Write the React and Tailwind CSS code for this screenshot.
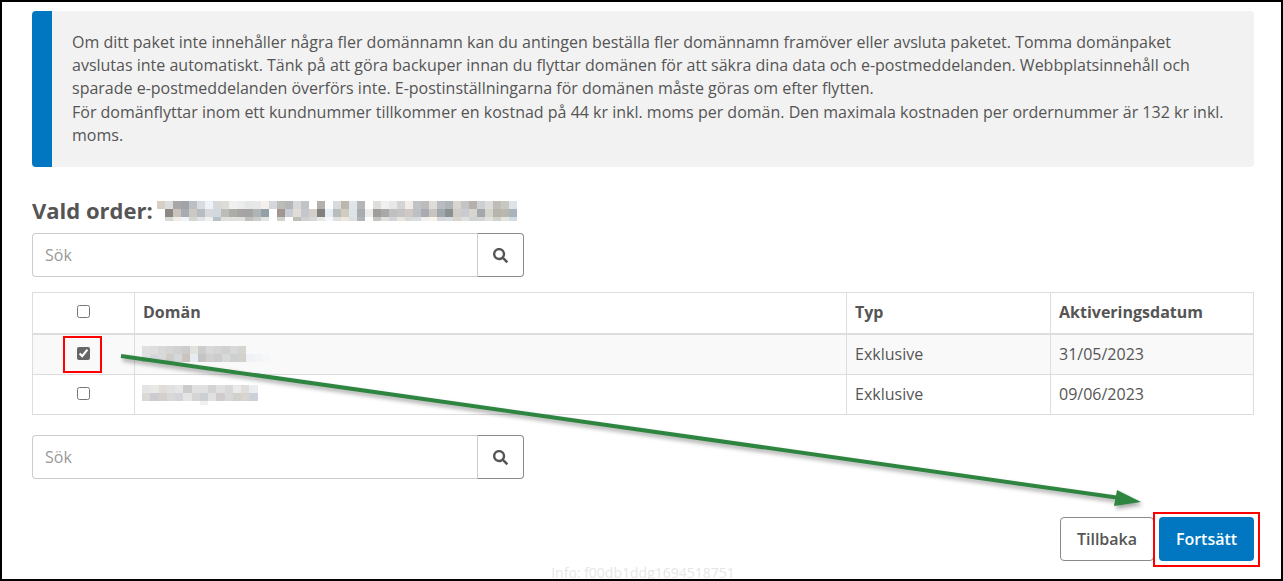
import React from "react";
import { FaSearch } from "react-icons/fa";

const orderRows = [
  "d8cfc4,dcdcdc,a8a8a8,a0a4a8,bcc0c4,d8dce0,eef2f8,d8d8d8,dcdcd8,f0f0f0,ececec,e4e6e8,e8e8e8,f4f0ec,d4d8dc,bcbcb8,b4b6b8,d8d8d8,c0c4c8,ffffff,b4b0ac,fcfdff,d8dadc,bcb6ac,e0e6e8,b4b6b8,ffffff,e0dedc,f0f0f0,e8e8ea,d4d4d4,f0ece8,c0c2c4,bcbcbc,e0dcd8,b8bcc0,b0b4b8,d8d4d0,c4c4c4,b4b0ac,ccd0d4,dcdcdc,c0bcb8,c8c8c0,dce4e8",
  "ffffff,8c8884,c8c4bc,a8acb0,ccc8c4,b8bcc0,d8d8dc,d0d8e0,bcbcb8,acaca8,a8a4a4,a4a4a4,b0b4b4,94a0a8,ffffff,a09890,c8ccd4,e0dcd8,c4c8cc,d4d0c8,808080,e8ecf4,b8bcbc,d0ccc0,dce4e8,a8acb0,ececec,a09c9c,a8a8a8,c0c0c0,c4c4c4,d0c8c4,bcc0c4,a8acb0,c8c4c0,a0a8ac,8c9090,d0ccc8,c8ccd0,d8d4d0,a4a8ac,d4d4cc,b8b4ac,b8b8b0,a8b4bc",
  "ffffff,d8d8d8,f0ece8,f0f4f8,d4d4d0,e0e4e8,f0f0f0,b8c0c8,e0e0dc,e0e0e0,e0e0dc,c0c0bc,ccccc8,e0e4e4,ffffff,d0d0cc,ffffff,c0bcb8,d0d0d0,d4d8dc,e8e8e4,f4f6fa,e0e0e0,ece8e0,dce0e0,b0b4b8,ffffff,c4c4c0,e0e0dc,d0d4d8,e8e4e0,d8d8d4,d8dce0,f0f0f0,f8f4ec,d4d8dc,d8dce0,d8d4cc,e0e0e0,d0d4d0,d4d4d4,e0e0dc,d0d0cc,e4e4e0,d0dce4",
];
const domainRowsA = [
  "e0e0e0,dedede,d8d8d8,d4d4d4,d0d0d0,cccccf,e2e2de,cccccc,d8d8d8,d4d4d4,d0d0d0,d8d8d8,d4d4d0,f9f9f9,f9f9f9,f9f9f9",
  "e0e2e4,d4d8dc,d8d8d8,d0ccc8,d4d8dc,ccc4bc,e6ecf0,c4c4c4,d0d0d0,cccccc,d8d8d8,ccd0d0,d4d0cc,eef2f6,f2f4f6,f6f7f8",
];
const domainRowsB = [
  "e4e4e4,e8e8e4,e0dcd8,e0e0e0,e6e6e6,cccccc,e0e0e0,e0e0e0,d4d4d4,e0e0e0,d8d8d8,eaeaea,e0dcdc,eaecf0",
  "dcd8d4,ccccd0,d4d0cc,d8d8d8,d4d4d8,e4e4e4,d4d4d4,ccd0d4,e0e0e0,d0cccc,d8d8d8,d0d0cc,d8d4d0,ccd0d8",
  "ffffff,ffffff,ffffff,ffffff,ffffff,ffffff,ffffff,f0f0f0,ffffff,ffffff,ffffff,ffffff,ffffff,ffffff",
];

function Pixels({ rows, cell, heights, className }) {
  const parsed = rows.map((r) => r.split(","));
  const cols = parsed[0].length;
  const hs = heights || rows.map(() => 8);
  const total = hs.reduce((a, b) => a + b, 0);
  let y = 0;
  return (
    <svg width={cols * cell} height={total} className={"block " + (className || "")} shapeRendering="crispEdges">
      {parsed.map((row, ri) => {
        const top = y;
        y += hs[ri];
        return row.map((c, ci) => (
          <rect key={ri + "-" + ci} x={ci * cell} y={top} width={cell + 0.5} height={hs[ri]} fill={"#" + c} />
        ));
      })}
    </svg>
  );
}

function SearchBox({ className }) {
  return (
    <div className={"flex h-[44px] w-[492px] " + className}>
      <input
        readOnly
        placeholder="Sök"
        className="h-full w-[445px] rounded-l-[4px] border border-r-0 border-[#cccccc] bg-white px-[12px] text-[16px] text-[#555555] outline-none placeholder:text-[#999999]"
      />
      <button className="flex h-full w-[47px] items-center justify-center rounded-r-[4px] border border-[#8a8a8a] border-l-[#cccccc] bg-white text-[#555555]">
        <FaSearch size={15} />
      </button>
    </div>
  );
}

function Box({ checked }) {
  return (
    <input
      type="checkbox"
      readOnly
      checked={!!checked}
      className="mx-auto mb-[2px] mt-0 block h-[13px] w-[13px] accent-[#666666]"
    />
  );
}

export default function App() {
  return (
    <div
      className="relative h-[581px] w-[1283px] overflow-hidden border-2 border-black bg-white text-[16px] text-[#555555]"
      style={{ fontFamily: '"Open Sans", sans-serif' }}
    >
      <div className="pl-[30px] pr-[27px] pt-[9px]">
        <div className="flex h-[156px] overflow-hidden rounded-[4px] bg-[#f2f2f2]">
          <div className="w-[20px] shrink-0 bg-[#0077c0]" />
          <div className="py-[19.5px] pl-[20px] pr-[20px] leading-[23.4px]">
            Om ditt paket inte innehåller några fler domännamn kan du antingen beställa fler domännamn framöver eller avsluta paketet. Tomma domänpaket avslutas inte automatiskt. Tänk på att göra backuper innan du flyttar domänen för att säkra dina data och e-postmeddelanden. Webbplatsinnehåll och sparade e-postmeddelanden överförs inte. E-postinställningarna för domänen måste göras om efter flytten.
            <br />
            För domänflyttar inom ett kundnummer tillkommer en kostnad på 44 kr inkl. moms per domän. Den maximala kostnaden per ordernummer är 132 kr inkl. moms.
          </div>
        </div>

        <div className="mt-[28px] flex h-[30px] items-center">
          <h2 className="text-[22px] font-bold leading-[30px]">Vald order:</h2>
          <Pixels rows={orderRows} cell={8} heights={[8, 8, 4]} className="ml-[4px] mt-[1px]" />
        </div>

        <SearchBox className="mt-[8px]" />

        <table className="mt-[15px] w-[1221px] table-fixed border-collapse border border-[#dddddd] text-[16px]">
          <colgroup>
            <col className="w-[102px]" />
            <col className="w-[712px]" />
            <col className="w-[204px]" />
            <col className="w-[203px]" />
          </colgroup>
          <thead>
            <tr className="h-[41px] border-b-2 border-[#dddddd]">
              <th className="border-r border-[#dddddd] p-0 text-center"><Box /></th>
              <th className="border-r border-[#dddddd] px-[8px] pb-[2px] pt-0 text-left font-bold">Domän</th>
              <th className="border-r border-[#dddddd] px-[8px] pb-[2px] pt-0 text-left font-bold">Typ</th>
              <th className="px-[8px] pb-[2px] pt-0 text-left font-bold">Aktiveringsdatum</th>
            </tr>
          </thead>
          <tbody>
            <tr className="h-[41px] border-b border-[#dddddd] bg-[#f9f9f9]">
              <td className="border-r border-[#dddddd] p-0 text-center"><Box checked /></td>
              <td className="border-r border-[#dddddd] py-0 pl-[7px] pr-[8px]">
                <Pixels rows={domainRowsA} cell={8} />
              </td>
              <td className="border-r border-[#dddddd] px-[8px] py-0">Exklusive</td>
              <td className="px-[8px] py-0">31/05/2023</td>
            </tr>
            <tr className="h-[40px]">
              <td className="border-r border-[#dddddd] p-0 text-center"><Box /></td>
              <td className="border-r border-[#dddddd] py-0 pl-[7px] pr-[8px]">
                <Pixels rows={domainRowsB} cell={8.25} heights={[8, 8, 4]} />
              </td>
              <td className="border-r border-[#dddddd] pb-[1px] pl-[8px] pr-[8px] pt-0">Exklusive</td>
              <td className="pb-[1px] pl-[8px] pr-[8px] pt-0">09/06/2023</td>
            </tr>
          </tbody>
        </table>

        <SearchBox className="mt-[20px]" />

        <div className="mt-[38px] flex justify-end gap-[5px]">
          <button className="h-[44px] w-[94px] rounded-[4px] border border-[#8a8a8a] bg-white text-[16px] font-semibold text-[#555555]">
            Tillbaka
          </button>
          <button className="h-[44px] w-[95px] rounded-[4px] bg-[#0077c0] text-[16px] font-semibold text-white">
            Fortsätt
          </button>
        </div>

        <div className="mt-[2px] text-center text-[14px] leading-[20px] text-[#e6e6e6]">Info: f00db1ddg1694518751</div>
      </div>

      {/* Annotations laid over the screenshot */}
      <div className="absolute left-[61px] top-[334px] h-[37px] w-[39px] border-2 border-[#ff0000]" />
      <div className="absolute left-[1151px] top-[510px] h-[55px] w-[107px] border-2 border-[#ff0000]" />
      <svg
        className="pointer-events-none absolute left-[-2px] top-[-2px] drop-shadow-[2px_3px_2px_rgba(0,0,0,0.35)]"
        width="1283"
        height="581"
      >
        <line x1="121" y1="356" x2="1120" y2="498" stroke="#2e8540" strokeWidth="4" />
        <polygon points="1117,490 1141,502 1114,506" fill="#2e8540" />
      </svg>
    </div>
  );
}
